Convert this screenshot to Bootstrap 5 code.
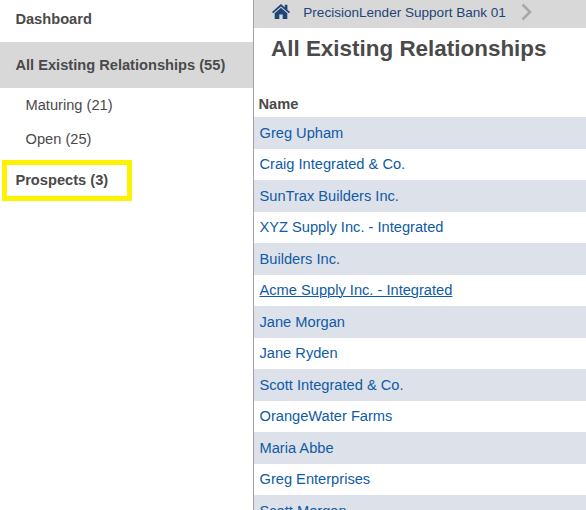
<!DOCTYPE html>
<html lang="en">
<head>
<meta charset="utf-8">
<meta name="viewport" content="width=device-width, initial-scale=1">
<title>All Existing Relationships</title>
<link href="https://cdn.jsdelivr.net/npm/bootstrap@5.3.0/dist/css/bootstrap.min.css" rel="stylesheet">
<style>
  body { font-family: "Liberation Sans", Arial, sans-serif; font-size: 14.65px; line-height: 20px; color: #4a4a4a; background: #fff; }
  a { text-decoration: none; }
  .side { width: 254px; border-right: 1px solid #a3a3a3; }
  .side .nav-link { color: #4a4a4a; padding: 0 0 0 15.4px; display: flex; align-items: center; }
  .side .top-item { font-weight: bold; height: 42px; padding-bottom: 4px; }
  .side .top-item.active { background: #d8d8d8; height: 46px; padding-bottom: 0; }
  .side .sub-item { height: 34px; padding-left: 25.5px; }
  .side .marked { height: 41px; padding-bottom: 1px; margin-top: 4px; }
  .marker { left: 2px; top: 0; width: 130px; height: 41px; border: 5px solid #fff200; }
  .crumbs { height: 28px; background: #d8d8d8; font-size: 13.55px; padding: 0 0 4px 18px; }
  .crumbs a { color: #1f4478; }
  .crumbs .home { margin-top: -1px; }
  .crumbs .bank { margin-left: 13.300px; padding-top: 2px; }
  .crumbs .next { margin-left: 15px; margin-top: -1px; }
  .page-title { font-size: 22.45px; line-height: 28px; font-weight: bold; padding: 7px 0 0 17px; height: 62px; }
  .head-cell { height: 27px; padding: 4px 0 0 4.5px; font-weight: bold; }
  .rel { height: 31px; padding: 0 0 2px 5.5px; color: #0f5ba5; border: 0; }
  .rel:hover, .rel.hovered { color: #0f5ba5; text-decoration: underline; text-underline-offset: 1px; text-decoration-thickness: 1px; }
  .rel:nth-child(odd) { height: 32px; padding-bottom: 0; background: #dde1ea; }
</style>
<script src="https://cdn.jsdelivr.net/npm/bootstrap@5.3.0/dist/js/bootstrap.bundle.min.js"></script>
</head>
<body>
<div class="d-flex vh-100 overflow-hidden">
  <aside class="side flex-shrink-0">
    <nav class="nav flex-column">
      <a class="nav-link top-item" href="#">Dashboard</a>
      <a class="nav-link top-item active" href="#">All Existing Relationships (55)</a>
      <a class="nav-link sub-item" href="#">Maturing (21)</a>
      <a class="nav-link sub-item" href="#">Open (25)</a>
      <a class="nav-link top-item marked position-relative" href="#">Prospects (3)<span class="marker position-absolute"></span></a>
    </nav>
  </aside>
  <main class="flex-grow-1">
    <nav class="crumbs d-flex align-items-center" aria-label="Breadcrumb">
      <a href="#" class="home d-flex" aria-label="Home">
        <svg width="18" height="15" viewBox="0 0 18 15" fill="#1f4478"><path d="M9 0 0 8l1.1 1.3L9 2.4l7.9 6.9L18 8l-2.6-2.3V.8h-2.6v2.6z"/><path d="M9 3.8 2.7 9.3V15h4.6v-4.4h3.4V15h4.6V9.3z"/></svg>
      </a>
      <a href="#" class="bank">PrecisionLender Support Bank 01</a>
      <svg class="next" width="12" height="18" viewBox="0 0 12 18" fill="none" stroke="#a8a8a8" stroke-width="2.6"><path d="M1.5 1.5 9 9l-7.5 7.5"/></svg>
    </nav>
    <h1 class="page-title m-0">All Existing Relationships</h1>
    <div class="head-cell">Name</div>
    <div class="d-flex flex-column">
      <a class="rel d-flex align-items-center flex-shrink-0" href="#">Greg Upham</a>
      <a class="rel d-flex align-items-center flex-shrink-0" href="#">Craig Integrated &amp; Co.</a>
      <a class="rel d-flex align-items-center flex-shrink-0" href="#">SunTrax Builders Inc.</a>
      <a class="rel d-flex align-items-center flex-shrink-0" href="#">XYZ Supply Inc. - Integrated</a>
      <a class="rel d-flex align-items-center flex-shrink-0" href="#">Builders Inc.</a>
      <a class="rel hovered d-flex align-items-center flex-shrink-0" href="#">Acme Supply Inc. - Integrated</a>
      <a class="rel d-flex align-items-center flex-shrink-0" href="#">Jane Morgan</a>
      <a class="rel d-flex align-items-center flex-shrink-0" href="#">Jane Ryden</a>
      <a class="rel d-flex align-items-center flex-shrink-0" href="#">Scott Integrated &amp; Co.</a>
      <a class="rel d-flex align-items-center flex-shrink-0" href="#">OrangeWater Farms</a>
      <a class="rel d-flex align-items-center flex-shrink-0" href="#">Maria Abbe</a>
      <a class="rel d-flex align-items-center flex-shrink-0" href="#">Greg Enterprises</a>
      <a class="rel d-flex align-items-center flex-shrink-0" href="#">Scott Morgan</a>
    </div>
  </main>
</div>
</body>
</html>
